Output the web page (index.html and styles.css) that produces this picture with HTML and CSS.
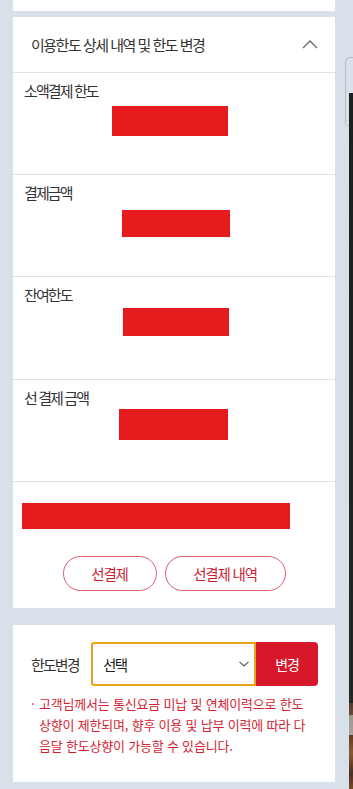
FILE: index.html
```html
<!DOCTYPE html>
<html lang="ko">
<head>
<meta charset="utf-8">
<title>이용한도 상세 내역</title>
<link rel="stylesheet" href="styles.css">
</head>
<body>
<div class="page">
  <div class="card card-top"></div>

  <section class="card detail">
    <div class="detail-head">
      <span class="detail-title">이용한도 상세 내역 및 한도 변경</span>
      <svg class="chev-up" width="16" height="10" viewBox="0 0 16 10"><path d="M1 9 L8 2 L15 9" fill="none" stroke="#6b6b6b" stroke-width="1.4"/></svg>
    </div>
    <div class="row row1">
      <div class="row-label">소액결제 한도</div>
      <div class="redact"></div>
    </div>
    <div class="row row2">
      <div class="row-label">결제금액</div>
      <div class="redact"></div>
    </div>
    <div class="row row3">
      <div class="row-label">잔여한도</div>
      <div class="redact"></div>
    </div>
    <div class="row row4">
      <div class="row-label">선 결제 금액</div>
      <div class="redact"></div>
    </div>
    <div class="detail-foot">
      <div class="redact-wide"></div>
      <div class="btns">
        <button class="pill pill-a">선결제</button>
        <button class="pill pill-b">선결제 내역</button>
      </div>
    </div>
  </section>

  <section class="card change">
    <div class="change-row">
      <span class="change-label">한도변경</span>
      <div class="select">
        <span>선택</span>
        <svg class="chev-down" width="10" height="6" viewBox="0 0 10 6"><path d="M0.5 0.8 L5 5 L9.5 0.8" fill="none" stroke="#555" stroke-width="1.1"/></svg>
      </div>
      <button class="change-btn">변경</button>
    </div>
    <div class="note">
      <span class="bullet">·</span>
      <p>고객님께서는 통신요금 미납 및 연체이력으로 한도 상향이 제한되며, 향후 이용 및 납부 이력에 따라 다음달 한도상향이 가능할 수 있습니다.</p>
    </div>
  </section>
</div>
<div class="edge">
  <div class="edge-tab"></div>
  <div class="edge-dark"></div>
</div>
</body>
</html>
```
FILE: styles.css
```css
html, body {
  margin: 0;
  padding: 0;
}
body {
  background: #d8e0ea;
  font-family: "Noto Sans CJK KR", "Noto Sans", sans-serif;
  color: #333;
  width: 353px;
  height: 789px;
  overflow: hidden;
  position: relative;
}
.page {
  padding: 0 18px 0 13px;
  display: flex;
  flex-direction: column;
}
.card {
  background: #fff;
}
.card-top {
  height: 11px;
  margin-bottom: 6px;
}
.detail {
  margin-bottom: 17px;
}
.detail-head {
  height: 55px;
  border-bottom: 1px solid #dde3ec;
  display: flex;
  align-items: center;
  justify-content: space-between;
  padding: 0 17px 0 18px;
}
.detail-title {
  font-size: 15px;
  letter-spacing: -1.5px;
  color: #333;
}
.chev-up {
  display: block;
  margin-top: -2px;
}
.row {
  border-bottom: 1px solid #dde3ec;
  padding: 8px 11px 0;
  box-sizing: border-box;
  height: 102px;
}
.row-label {
  font-size: 15px;
  line-height: 20px;
  letter-spacing: -1.9px;
  color: #333;
}
.redact {
  background: #e51b1e;
}
.row1 .redact { margin: 5px 0 0 88px; width: 116px; height: 30px; }
.row2 .redact { margin: 7px 0 0 98px; width: 108px; height: 27px; }
.row3 { height: 103px; }
.row3 .redact { margin: 3px 0 0 99px; width: 106px; height: 28px; }
.row4 .redact { margin: 1px 0 0 95px; width: 109px; height: 31px; }

.detail-foot {
  padding: 21px 0 17px 9px;
}
.redact-wide {
  width: 268px;
  height: 26px;
  background: #e51b1e;
}
.btns {
  margin-top: 27px;
  display: flex;
  justify-content: center;
  gap: 8px;
  padding-right: 9px;
}
.pill {
  height: 35px;
  border: 1px solid #de5c67;
  border-radius: 18px;
  background: #fff;
  color: #cf1d33;
  font-family: inherit;
  font-size: 14.5px;
  letter-spacing: -1.2px;
  padding: 0;
}
.pill-a { width: 94px; }
.pill-b { width: 121px; }

.change {
  padding: 17px 17px 26px 18px;
}
.change-row {
  display: flex;
  align-items: center;
}
.change-label {
  width: 60px;
  font-size: 15px;
  letter-spacing: -1.9px;
  color: #333;
}
.select {
  width: 165px;
  height: 44px;
  box-sizing: border-box;
  border: 2px solid #e6a41c;
  border-radius: 3px 0 0 3px;
  display: flex;
  align-items: center;
  justify-content: space-between;
  padding: 0 5px 0 10px;
  font-size: 14.5px;
  letter-spacing: -1.5px;
  color: #222;
}
.chev-down {
  display: block;
}
.change-btn {
  width: 62px;
  height: 44px;
  border: 0;
  border-radius: 0 4px 4px 0;
  background: #d7182b;
  color: #fff;
  font-family: inherit;
  font-size: 14px;
  letter-spacing: -1.2px;
  padding: 0;
}
.note {
  margin-top: 7px;
  display: flex;
  color: #d41f34;
  font-size: 13px;
  line-height: 21px;
}
.bullet {
  width: 8px;
  flex: none;
}
.note p {
  margin: 0;
  word-break: break-all;
  letter-spacing: -0.2px;
  padding-right: 6px;
}

.edge {
  position: absolute;
  top: 0;
  right: 0;
  width: 8px;
  height: 789px;
}
.edge-tab {
  position: absolute;
  left: 0;
  top: 57px;
  width: 10px;
  height: 70px;
  border: 1px solid #b5bcc6;
  border-radius: 5px 0 0 5px;
  box-sizing: border-box;
}
.edge-dark {
  position: absolute;
  left: 4px;
  top: 93px;
  width: 4px;
  bottom: 0;
  background: linear-gradient(#1e1e1e 0, #252525 610px, #5a3b28 610px, #6b4a30 622px, #9c968e 622px, #a8a29a 642px, #5c3a24 642px, #8a5a30 660px, #4a2e20 680px, #7a4a28 696px);
}
```
